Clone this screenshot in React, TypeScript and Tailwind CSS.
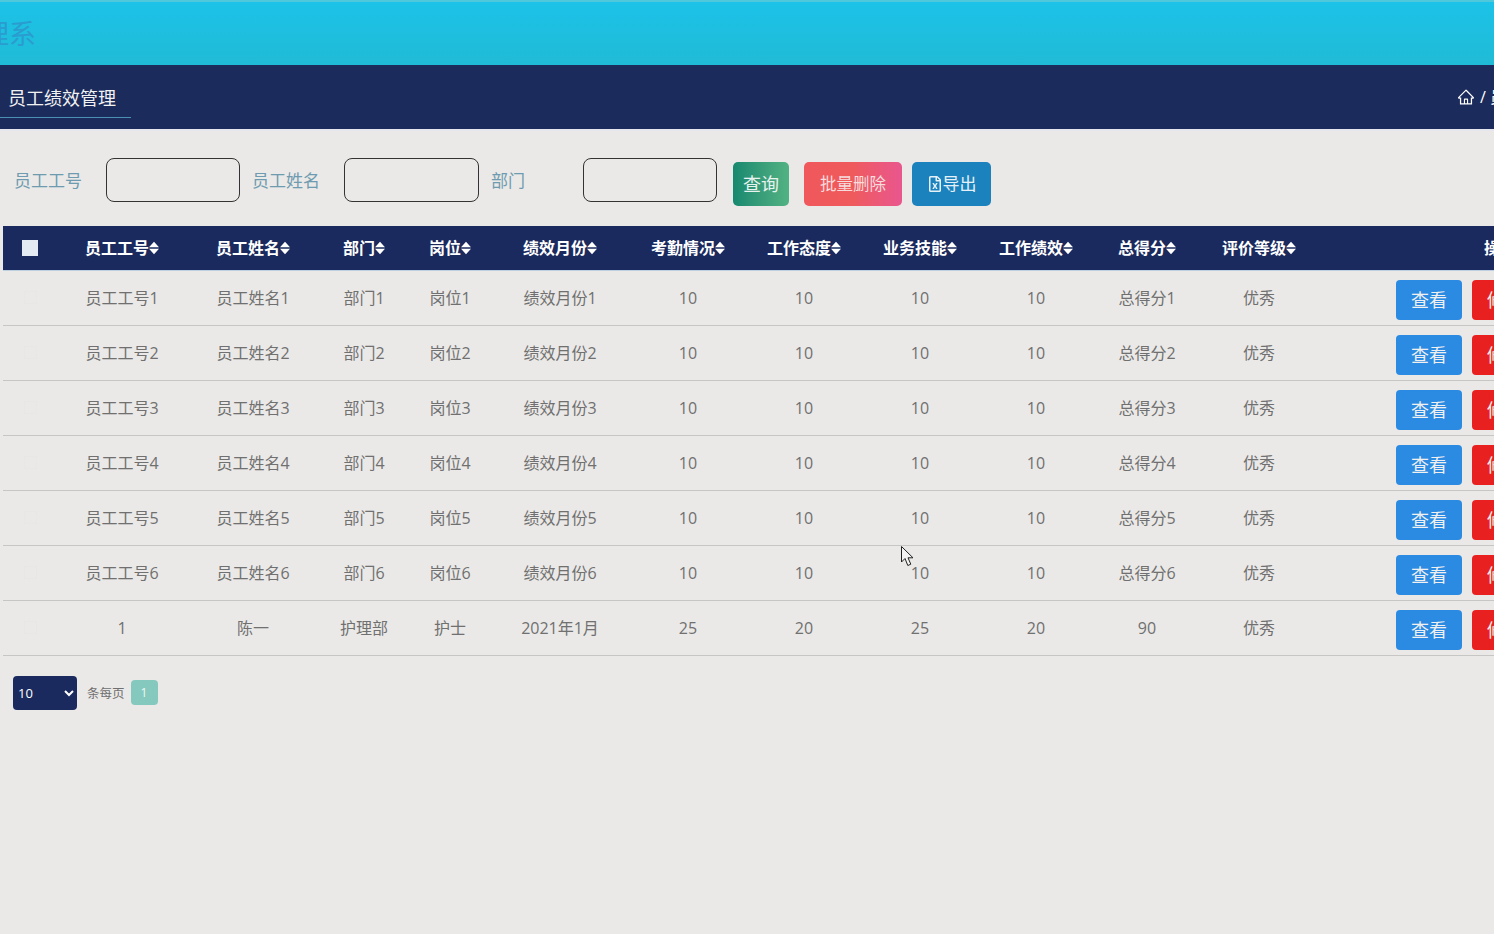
import { AiOutlineHome } from "react-icons/ai";
import { FaRegFileExcel } from "react-icons/fa";

const font = { fontFamily: '"Open Sans", "Noto Sans CJK SC", "Liberation Sans", sans-serif' };

const heads = ["员工工号", "员工姓名", "部门", "岗位", "绩效月份", "考勤情况", "工作态度", "业务技能", "工作绩效", "总得分", "评价等级", "操作"];

const rows: string[][] = [1, 2, 3, 4, 5, 6].map((n) => [
  `员工工号${n}`, `员工姓名${n}`, `部门${n}`, `岗位${n}`, `绩效月份${n}`, "10", "10", "10", "10", `总得分${n}`, "优秀",
]);
rows.push(["1", "陈一", "护理部", "护士", "2021年1月", "25", "20", "25", "20", "90", "优秀"]);

function Sort() {
  return (
    <svg width="10" height="14" viewBox="0 0 10 14" className="inline-block align-[-1px]">
      <path d="M5 0.8 L10 6.3 H0 Z M5 13.2 L10 7.7 H0 Z" fill="#ffffff" />
    </svg>
  );
}

function Field({ label, w }: { label: string; w: string }) {
  return (
    <>
      <label className="w-[80px] flex-none pt-[12px] text-[17px] leading-[22px] text-[#6f9bb0]">{label}</label>
      <input className={`${w} h-[44px] flex-none rounded-[8px] border border-[#333333] bg-transparent`} />
    </>
  );
}

export default function App() {
  return (
    <div className="relative h-[934px] w-[1494px] overflow-hidden bg-[#eae9e7]" style={font}>
      <header className="h-[65px] overflow-hidden border-t-2 border-[#4fc8dc] bg-gradient-to-b from-[#1cc2e8] to-[#20bbd6] pt-[14px]">
        <div className="-ml-[45px] whitespace-nowrap text-[27px] font-normal leading-[36px] text-[#2a9ccf]">管理系</div>
      </header>

      <nav className="flex h-[64px] items-start bg-[#1b2b5c] text-white">
        <div className="h-[53px] w-[131px] flex-none border-b border-[#4d8fb5] pl-[8px] pt-[20px] text-[18px] leading-[26px] text-[#f2f2f2]">
          员工绩效管理
        </div>
        <div className="ml-[1326px] flex flex-none items-center gap-[5px] whitespace-nowrap pt-[21px] text-[16px] leading-[22px]">
          <AiOutlineHome className="text-[18px]" />
          <span>/ 员工绩效管理</span>
        </div>
      </nav>

      <main className="border-t-2 border-[#e6e6ee]">
        <form className="flex items-start gap-x-[12px] pl-[14px] pt-[27px]">
          <Field label="员工工号" w="w-[134px]" />
          <Field label="员工姓名" w="w-[135px]" />
          <Field label="部门" w="w-[134px]" />
          <div className="ml-[4px] mt-[4px] flex gap-[15px] text-white">
            <button type="button" className="h-[44px] w-[56px] rounded-[5px] bg-gradient-to-r from-[#15896f] to-[#52b283] text-[18px] text-[#e8f2ee]">查询</button>
            <div className="flex gap-[10px]">
              <button type="button" className="h-[44px] w-[98px] rounded-[5px] bg-gradient-to-r from-[#f0585c] via-[#ef5a5c] to-[#e9568e] text-[16.5px] text-[#f7dcdc]">批量删除</button>
              <button type="button" className="flex h-[44px] w-[79px] items-center justify-center rounded-[5px] bg-[#1c82bd] text-[17px] text-[#e6f1f7]">
                <FaRegFileExcel className="text-[16px]" />导出
              </button>
            </div>
          </div>
        </form>

        <table className="ml-[3px] mt-[20px] w-[1690px] table-fixed border-collapse text-center text-[16px]">
          <colgroup>
            <col className="w-[54px]" />
            <col className="w-[130px]" />
            <col className="w-[132px]" />
            <col className="w-[90px]" />
            <col className="w-[82px]" />
            <col className="w-[138px]" />
            <col className="w-[118px]" />
            <col className="w-[114px]" />
            <col className="w-[118px]" />
            <col className="w-[114px]" />
            <col className="w-[108px]" />
            <col className="w-[116px]" />
            <col className="w-[376px]" />
          </colgroup>
          <thead>
            <tr className="h-[44px] border-b border-[#bcd0e0] bg-[#1b2a5e] text-white">
              <th className="p-0">
                <span className="mx-auto block h-[16px] w-[16px] bg-[#e4ebf3]" />
              </th>
              {heads.map((h) => (
                <th key={h} className="whitespace-nowrap p-0 font-bold">
                  {h}
                  <Sort />
                </th>
              ))}
            </tr>
          </thead>
          <tbody>
            {rows.map((r, i) => (
              <tr key={i} className="h-[55px] border-b border-[#c6c6c4] text-[#707070]">
                <td className="p-0">
                  <span className="mx-auto block h-[13px] w-[13px] rounded-[2px] border border-[#e8e7e5]" />
                </td>
                {r.map((c, j) => (
                  <td key={j} className="whitespace-nowrap p-0">{c}</td>
                ))}
                <td className="p-0">
                  <div className="flex justify-center gap-[10px] pt-[4px] text-[18px] text-[#f0f0f0]">
                    <button type="button" className="h-[40px] w-[66px] rounded-[4px] bg-[#2b8ae2] pt-[1px]">查看</button>
                    <button type="button" className="h-[40px] w-[66px] rounded-[4px] bg-[#e8201f] pt-[1px]">修改</button>
                    <button type="button" className="h-[40px] w-[66px] rounded-[4px] bg-[#e8201f] pt-[1px]">删除</button>
                  </div>
                </td>
              </tr>
            ))}
          </tbody>
        </table>

        <div className="ml-[13px] mt-[20px] flex items-center">
          <select className="h-[34px] w-[64px] rounded-[4px] bg-[#1b2a5e] pl-[1px] text-[13px] text-white">
            <option>10</option>
          </select>
          <span className="ml-[10px] pt-[3px] text-[12.5px] text-[#6f6f6f]">条每页</span>
          <span className="ml-[6px] flex h-[25px] w-[27px] items-center justify-center rounded-[4px] bg-[#85c9be] pt-[1px] text-[12px] text-[#eef7f5]">1</span>
        </div>
      </main>

      <svg className="absolute left-[900px] top-[545px]" width="16" height="23" viewBox="0 0 16 23">
        <path d="M1.5 1.5 V17 L5 13.5 L7.8 20.5 L10.8 19.2 L8 12.8 H13 Z" fill="#f4f4f4" stroke="#222222" strokeWidth="1" />
      </svg>
    </div>
  );
}
